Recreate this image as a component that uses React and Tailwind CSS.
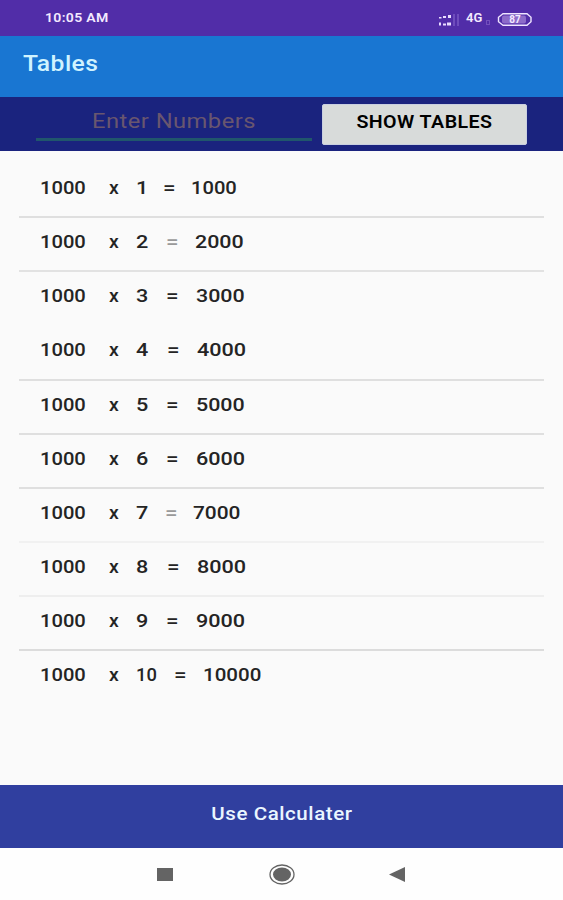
const rows = [
  { n: 1, nWidth: "w-[27px]", eqWidth: "w-[28px]", scale: "scale-x-[1.12]", border: "border-[#dfdfdf]" },
  { n: 2, nWidth: "w-[30px]", eqWidth: "w-[29px]", scale: "scale-x-[1.19]", border: "border-[#e2e2e2]", light: true },
  { n: 3, nWidth: "w-[30px]", eqWidth: "w-[30px]", scale: "scale-x-[1.19]", border: "border-transparent" },
  { n: 4, nWidth: "w-[31px]", eqWidth: "w-[30px]", scale: "scale-x-[1.2]", border: "border-[#dfdfdf]" },
  { n: 5, nWidth: "w-[30px]", eqWidth: "w-[30px]", scale: "scale-x-[1.19]", border: "border-[#dfdfdf]" },
  { n: 6, nWidth: "w-[30px]", eqWidth: "w-[30px]", scale: "scale-x-[1.2]", border: "border-[#dfdfdf]" },
  { n: 7, nWidth: "w-[29px]", eqWidth: "w-[28px]", scale: "scale-x-[1.16]", border: "border-[#f1f1f1]", light: true },
  { n: 8, nWidth: "w-[31px]", eqWidth: "w-[30px]", scale: "scale-x-[1.2]", border: "border-[#eeeeee]" },
  { n: 9, nWidth: "w-[30px]", eqWidth: "w-[30px]", scale: "scale-x-[1.2]", border: "border-[#dcdcdc]" },
  { n: 10, nWidth: "w-[38px]", eqWidth: "w-[29px]", scale: "scale-x-[1.14]", border: "border-transparent" },
];

function StatusBar() {
  return (
    <div className="flex h-9 items-center justify-between bg-[#512da8] pr-[30px] pb-px pl-[45px] text-[#f3eaff]">
      <span className="origin-left scale-x-[1.08] text-[13px] leading-none font-semibold tracking-[0.3px]">
        10:05 AM
      </span>
      <div className="flex items-center">
        <svg width="24" height="14" viewBox="0 0 24 14" className="mt-1.5">
          <g fill="#e9dcff">
            <rect x="1" y="3" width="2.5" height="1.5" />
            <rect x="5" y="2" width="3" height="2" />
            <rect x="10" y="1" width="3" height="3" />
            <rect x="1" y="8.5" width="2" height="3" />
            <rect x="5" y="9.5" width="3" height="2" />
            <rect x="9" y="8.5" width="4" height="3" />
          </g>
          <path d="M16 0v12M20 0v12" stroke="#7a58c2" strokeWidth="1.5" />
        </svg>
        <span className="ml-1 w-[18px] text-[13px] leading-none font-semibold">4G</span>
        <span className="mt-2.5 ml-0.5 h-[5px] w-1 border border-[#7450bd]" />
        <svg width="36" height="13" viewBox="0 0 36 13" className="mt-1 ml-[7px]">
          <path
            d="M6 .8h24l4 3.500v4.400l-4 3.500H6l-4.500-3.500V4.300z"
            fill="none"
            stroke="#eee4ff"
            strokeWidth="1.4"
          />
          <rect x="5" y="2.500" width="24" height="8" rx="2" fill="#8c6bc9" />
          <text x="18" y="10" textAnchor="middle" fontSize="10" fontWeight="700" fill="#f3eaff">
            87
          </text>
        </svg>
      </div>
    </div>
  );
}

function TableRow({ row }) {
  return (
    <li className={`flex h-[54.15px] items-center border-b-2 pb-[5px] pl-[21px] ${row.border}`}>
      <span className="w-[69px]">
        <span className="inline-block origin-left scale-x-[1.12]">1000</span>
      </span>
      <span className="w-[27px]">
        <span className="inline-block origin-left scale-x-[1.08]">x</span>
      </span>
      <span className={row.nWidth}>
        <span className={`inline-block origin-left ${row.n === 10 ? "scale-x-[1.02]" : "scale-x-[1.2]"}`}>
          {row.n}
        </span>
      </span>
      <span className={`${row.eqWidth} ${row.light ? "text-[#999]" : ""}`}>
        <span className="inline-block origin-left scale-x-[1.24]">=</span>
      </span>
      <span className={`inline-block origin-left ${row.scale}`}>{row.n * 1000}</span>
    </li>
  );
}

export default function App() {
  return (
    <div className="flex h-[900px] w-[563px] flex-col overflow-hidden bg-[#fafafa] font-['Roboto',sans-serif]">
      <StatusBar />

      <header className="flex h-[61px] items-center bg-[#1976d2] pb-1.5 pl-[23px]">
        <h1 className="origin-left scale-x-[1.12] text-[22px] leading-none font-medium tracking-[0.4px] text-[#d0f3ff]">
          Tables
        </h1>
      </header>

      <div className="flex h-[54px] bg-[#1a237e] pl-9">
        <div className="h-[44px] w-[276px] border-b-[3px] border-[#20566c]">
          <input
            type="text"
            placeholder="Enter Numbers"
            className="h-[44px] w-full scale-x-[1.13] bg-transparent pt-[3px] text-center text-[21px] tracking-[0.4px] text-white outline-none placeholder:text-[#69566f]"
          />
        </div>
        <button className="mt-[7px] ml-2.5 h-[41px] w-[205px] rounded-xs border border-[#c9cfe0] bg-[#d8dbda] pb-1.5 text-black">
          <span className="inline-block scale-x-[1.09] text-[18px] font-semibold tracking-[0.4px]">
            SHOW TABLES
          </span>
        </button>
      </div>

      <main className="flex-1 px-[19px] pt-[13px]">
        <ul className="text-[18px] font-medium text-[#242424]">
          {rows.map((row) => (
            <TableRow key={row.n} row={row} />
          ))}
        </ul>
      </main>

      <button className="h-[63px] bg-[#303f9f] pb-1.5 text-[#eaf6ff]">
        <span className="inline-block scale-x-[1.14] text-[18px] font-medium tracking-[0.5px]">
          Use Calculater
        </span>
      </button>

      <nav className="h-[52px] bg-[#fefefe] text-[#646464]">
        <svg width="563" height="52" viewBox="0 0 563 52">
          <rect x="157" y="20" width="16" height="13" fill="currentColor" />
          <ellipse cx="282" cy="26.500" rx="12" ry="9.500" fill="none" stroke="currentColor" strokeWidth="1.300" />
          <ellipse cx="282" cy="26.500" rx="9" ry="7" fill="currentColor" />
          <path d="M389 26.500L405 19v15z" fill="currentColor" />
        </svg>
      </nav>
    </div>
  );
}
